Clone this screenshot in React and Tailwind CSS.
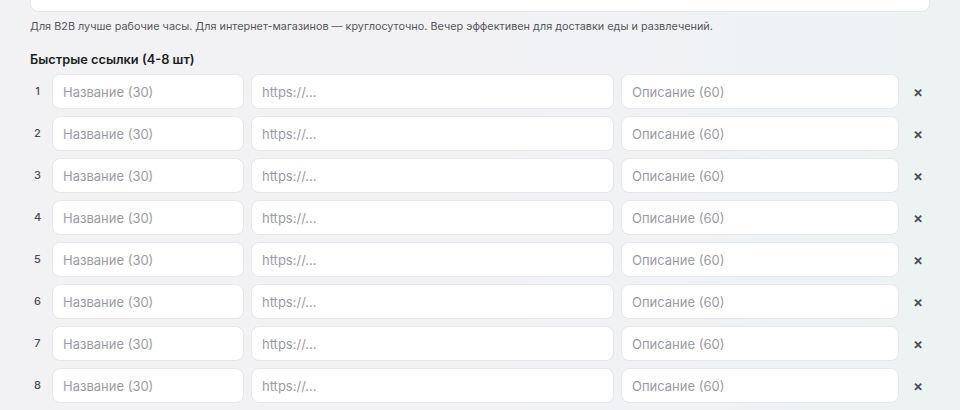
import React from 'react';

const rows = [1, 2, 3, 4, 5, 6, 7, 8];

const inputCls =
    'h-[35px] rounded-[8px] border border-[#e6e7eb] bg-white px-[10px] text-[13px] text-gray-800 placeholder:text-[#9a9ca6] outline-none';

const App = () => {
    return (
        <div
            className="h-[410px] w-[960px] overflow-hidden bg-gradient-to-r from-[#f2f2f5] via-[#f2f2f5] to-[#edf2f3] px-[30px]"
            style={{ fontFamily: 'Inter, "Noto Sans", sans-serif' }}
        >
            {/* top input, cut off by the window */}
            <div className="-mt-[24px] h-[36px] w-[900px] rounded-[8px] border border-[#e6e7eb] bg-white" />

            <p className="mt-[7px] text-[10.85px] leading-[14px] text-[#55575f]">
                Для B2B лучше рабочие часы. Для интернет-магазинов — круглосуточно. Вечер эффективен для доставки еды и развлечений.
            </p>

            <h3 className="mt-[19px] text-[12.8px] font-semibold leading-[16px] text-[#1c1d22]">Быстрые ссылки (4-8 шт)</h3>

            <div className="mt-[6px] flex flex-col gap-[7px]">
                {rows.map((n) => (
                    <div key={n} className="flex items-center gap-[7px]">
                        <span className="w-[15px] text-center text-[11px] font-medium text-[#4a4c55]">{n}</span>
                        <input className={`${inputCls} w-[192px]`} placeholder="Название (30)" />
                        <input className={`${inputCls} w-[363px]`} placeholder="https://..." />
                        <input className={`${inputCls} w-[278px]`} placeholder="Описание (60)" />
                        <button className="flex h-[24px] w-[24px] items-center justify-center text-[15px] font-semibold leading-none text-[#4a4c55]">
                            ×
                        </button>
                    </div>
                ))}
            </div>
        </div>
    );
};

export default App;
